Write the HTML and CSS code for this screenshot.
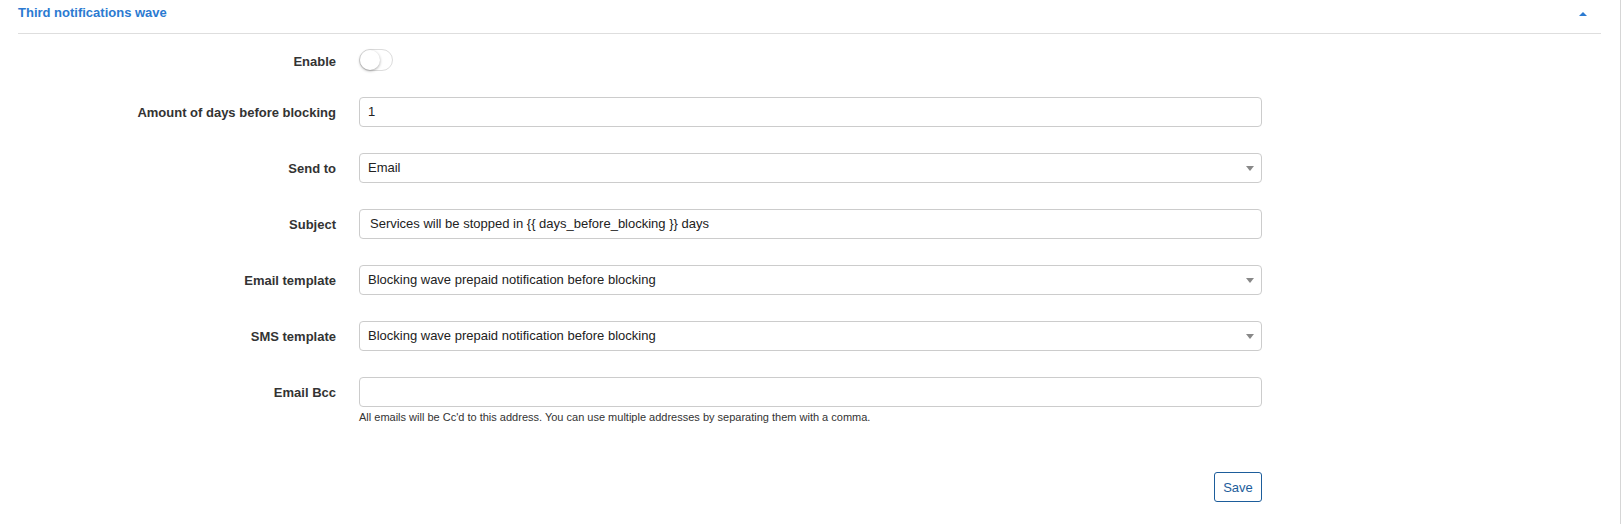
FILE: index.html
```html
<!DOCTYPE html>
<html>
<head>
<meta charset="utf-8">
<link rel="stylesheet" href="styles.css">
</head>
<body>
<div class="page">
  <div class="section-head">
    <span class="section-title">Third notifications wave</span>
    <span class="caret-up"></span>
  </div>
  <form class="form">
    <div class="row row-toggle">
      <label class="label label-low">Enable</label>
      <div class="field"><span class="toggle"><span class="knob"></span></span></div>
    </div>
    <div class="row">
      <label class="label">Amount of days before blocking</label>
      <div class="field"><div class="input">1</div></div>
    </div>
    <div class="row">
      <label class="label">Send to</label>
      <div class="field"><div class="input select">Email<span class="arrow"></span></div></div>
    </div>
    <div class="row">
      <label class="label">Subject</label>
      <div class="field"><div class="input input-pad">Services will be stopped in {{ days_before_blocking }} days</div></div>
    </div>
    <div class="row">
      <label class="label">Email template</label>
      <div class="field"><div class="input select">Blocking wave prepaid notification before blocking<span class="arrow"></span></div></div>
    </div>
    <div class="row">
      <label class="label">SMS template</label>
      <div class="field"><div class="input select">Blocking wave prepaid notification before blocking<span class="arrow"></span></div></div>
    </div>
    <div class="row row-last">
      <label class="label">Email Bcc</label>
      <div class="field"><div class="input"></div></div>
    </div>
    <div class="help">All emails will be Cc'd to this address. You can use multiple addresses by separating them with a comma.</div>
    <div class="actions"><button type="button" class="btn">Save</button></div>
  </form>
</div>
</body>
</html>
```

FILE: styles.css
```css
html, body {
  margin: 0;
  padding: 0;
  background: #fff;
}
body {
  font-family: "Liberation Sans", Arial, sans-serif;
  font-size: 13px;
  color: #333;
}
.page {
  width: 1621px;
  height: 524px;
  border-right: 1px solid #d6d6d6;
  box-sizing: border-box;
}
.section-head {
  margin: 0 19px 0 18px;
  height: 34px;
  border-bottom: 1px solid #dedede;
  display: flex;
  justify-content: space-between;
  align-items: flex-start;
  padding-top: 5px;
  box-sizing: border-box;
}
.section-title {
  color: #2b7ad1;
  font-weight: bold;
  line-height: 16px;
}
.caret-up {
  width: 0;
  height: 0;
  border-left: 4px solid transparent;
  border-right: 4px solid transparent;
  border-bottom: 4px solid #2b7ad1;
  margin-top: 7px;
  margin-right: 14px;
}
.form {
  padding-top: 11px;
}
.row {
  display: flex;
  align-items: center;
  gap: 23px;
  margin-bottom: 26px;
  min-height: 30px;
}
.row-toggle {
  margin-bottom: 22px;
}
.row-last {
  margin-bottom: 0;
}
.label {
  width: 336px;
  text-align: right;
  font-weight: bold;
  color: #333;
}
.label-low {
  padding-top: 3px;
}
.field {
  width: 903px;
}
.toggle {
  display: block;
  width: 34px;
  height: 22px;
  border: 1px solid #dcdcdc;
  border-radius: 12px;
  box-sizing: border-box;
  position: relative;
  background: #fff;
}
.knob {
  position: absolute;
  left: 0;
  top: 0;
  width: 20px;
  height: 20px;
  border-radius: 50%;
  background: #fff;
  box-shadow: 0 1px 3px rgba(0,0,0,0.35);
}
.input {
  height: 30px;
  border: 1px solid #cccccc;
  border-radius: 4px;
  box-sizing: border-box;
  padding: 0 12px 0 8px;
  line-height: 28px;
  color: #222;
  position: relative;
}
.input-pad {
  padding-left: 10px;
}
.arrow {
  position: absolute;
  right: 7px;
  top: 12px;
  width: 0;
  height: 0;
  border-left: 4px solid transparent;
  border-right: 4px solid transparent;
  border-top: 5px solid #888;
}
.help {
  margin: 4px 0 0 359px;
  font-size: 11px;
  line-height: 13px;
  color: #333;
}
.actions {
  margin: 48px 0 0 359px;
  width: 903px;
  display: flex;
  justify-content: flex-end;
}
.btn {
  width: 48px;
  height: 30px;
  border: 1px solid #1d5d9b;
  border-radius: 3px;
  background: #fff;
  color: #1d5d9b;
  font-family: "Liberation Sans", Arial, sans-serif;
  font-size: 13px;
  padding: 0;
}
```
